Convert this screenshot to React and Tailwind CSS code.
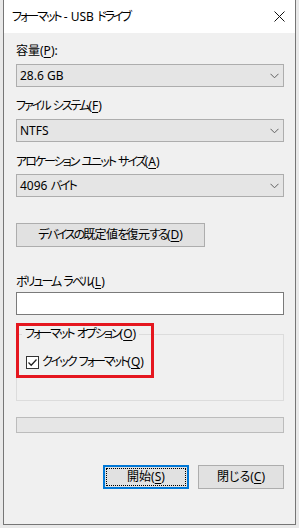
import React from "react";

const FONT = "font-['Noto_Sans','Noto_Sans_CJK_JP',sans-serif] [font-feature-settings:'palt']";

function J({ children }) {
  return <span className="tracking-[-2px]">{children}</span>;
}

function Chevron() {
  return (
    <svg width="9" height="6" viewBox="0 0 9 6" className="shrink-0">
      <polyline points="0.5,0.8 4.5,4.8 8.5,0.8" fill="none" stroke="#606060" strokeWidth="1" />
    </svg>
  );
}

function Select({ children, className = "" }) {
  return (
    <div className={`h-[23px] border border-[#adadad] bg-[#e5e5e5] flex items-center justify-between pl-[3px] pr-[4px] ${className}`}>
      <span className="text-[12px] leading-[16px] text-black whitespace-pre">{children}</span>
      <Chevron />
    </div>
  );
}

function Label({ children, className = "" }) {
  return <div className={`h-[16px] text-[12px] leading-[16px] text-black whitespace-pre ${className}`}>{children}</div>;
}

function K({ children }) {
  return <u className="underline underline-offset-[2px] decoration-1">{children}</u>;
}

export default function App() {
  return (
    <div className={`w-[299px] h-[528px] bg-[#e9e9e9] overflow-hidden ${FONT}`}>
      <div className="ml-[3px] w-[293px] h-[525px] border-x border-b border-[#767676] bg-[#f0f0f0] flex flex-col">
        {/* title bar */}
        <div className="h-[33px] bg-white flex items-center justify-between pl-[8px] pr-[10px] shrink-0">
          <span className="text-[12px] leading-[16px] text-black whitespace-pre">
            <J>フォーマット</J>{" - USB "}<J>ドライブ</J>
          </span>
          <svg width="11" height="11" viewBox="0 0 11 11">
            <path d="M0.5 0.5 L10.5 10.5 M10.5 0.5 L0.5 10.5" stroke="#111" strokeWidth="1" fill="none" />
          </svg>
        </div>

        <div className="flex flex-col pl-[12px] pr-[11px]">
          <Label className="mt-[10px]">容量(<K>P</K>):</Label>
          <Select className="mt-[5px]">28.6 GB</Select>

          <Label className="mt-[11px]"><J>ファイル</J>{" "}<J>システム</J>(<K>F</K>)</Label>
          <Select className="mt-[5px]">NTFS</Select>

          <Label className="mt-[12px]"><J>アロケーション</J>{" "}<J>ユニット</J>{" "}<J>サイズ</J>(<K>A</K>)</Label>
          <Select className="mt-[4px]">{"4096 "}<J>バイト</J></Select>

          <div className="mt-[26px] w-[189px] h-[24px] border border-[#adadad] bg-[#e1e1e1] flex items-center justify-center text-[12px] leading-[16px] text-black whitespace-nowrap">
            <J>デバイスの</J><span className="tracking-[-0.6px]">既定値</span><J>を</J><span className="tracking-[-0.6px]">復元</span><J>する</J>(<K>D</K>)
          </div>

          <Label className="mt-[27px]"><J>ボリューム</J>{" "}<J>ラベル</J>(<K>L</K>)</Label>
          <div className="mt-[2px] h-[23px] border border-[#7a7a7a] bg-white" />

          {/* group box */}
          <div className="relative mt-[19px] h-[67px] border border-[#dcdcdc]">
            <div className="absolute left-[5px] top-[-9px] px-[3px] bg-[#f0f0f0] text-[12px] leading-[16px] text-black whitespace-pre">
              <J>フォーマット</J>{" "}<J>オプション</J>(<K>O</K>)
            </div>
            <div className="absolute left-[9px] top-[19px] flex items-center gap-[3px]">
              <div className="w-[13px] h-[13px] border border-[#333] bg-white flex items-center justify-center">
                <svg width="11" height="11" viewBox="0 0 11 11">
                  <polyline points="1.5,5.5 4.2,8.2 9.5,2.5" fill="none" stroke="#222" strokeWidth="1.3" />
                </svg>
              </div>
              <span className="text-[12px] leading-[16px] text-black whitespace-pre">
                <J>クイック</J>{" "}<J>フォーマット</J>(<K>Q</K>)
              </span>
            </div>
            {/* red annotation */}
            <div className="absolute left-[-1px] top-[-12px] w-[138px] h-[55px] border-[3px] border-[#e5171f]" />
          </div>

          <div className="mt-[16px] h-[16px] border border-[#bcbcbc] bg-[#e6e6e6]" />

          <div className="mt-[32px] flex justify-end gap-[9px]">
            <div className="w-[86px] h-[24px] border-2 border-[#0078d7] bg-[#e1e1e1] p-[1px]">
              <div className="w-full h-full border border-dotted border-black flex items-center justify-center text-[12px] leading-[16px] text-black">
                開始(<K>S</K>)
              </div>
            </div>
            <div className="w-[86px] h-[24px] border border-[#adadad] bg-[#e1e1e1] flex items-center justify-center text-[12px] leading-[16px] text-black whitespace-nowrap">
              閉じる(<K>C</K>)
            </div>
          </div>
        </div>
      </div>
    </div>
  );
}
